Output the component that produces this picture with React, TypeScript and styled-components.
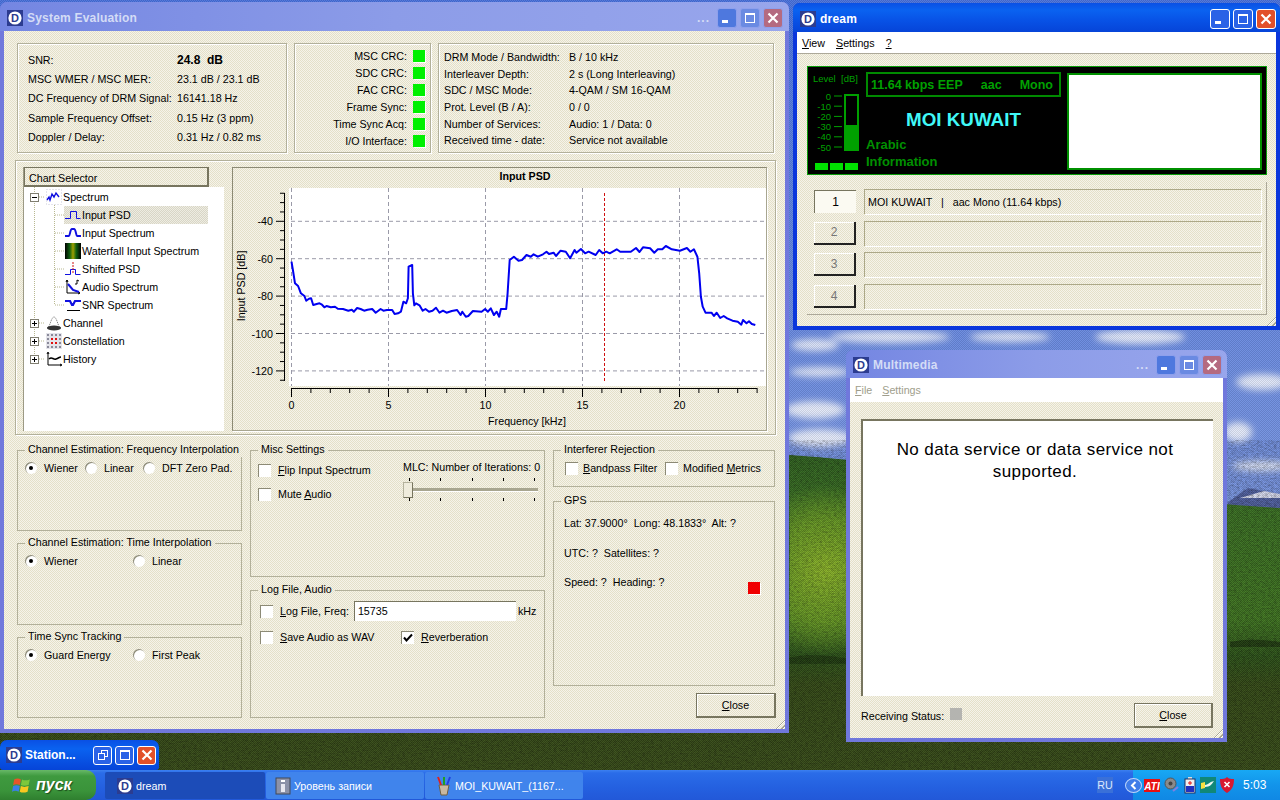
import React from "react";
import styled, { createGlobalStyle, css } from "styled-components";

const Global = createGlobalStyle`
  html, body { margin: 0; padding: 0; overflow: hidden; background: #3a5018; }
  * { box-sizing: border-box; }
  body { font: 10.7px/14px "Liberation Sans", Arial, sans-serif; color: #000; }
  u { text-underline-offset: 1px; }
`;

const dither = css`
  background-color: #ece9d8;
  background-image: repeating-conic-gradient(#e4e0c8 0 25%, #f5f3ea 0 50%);
  background-size: 2px 2px;
`;

const Desktop = styled.div`
  position: relative;
  width: 1280px;
  height: 800px;
  overflow: hidden;
`;
const Wallpaper = styled.div`
  position: absolute;
  inset: 0;
  svg { display: block; }
  &::after {
    content: "";
    position: absolute;
    inset: 0;
    background-image: repeating-conic-gradient(rgba(0,0,0,.1) 0 25%, rgba(255,255,255,.05) 0 50%);
    background-size: 2px 2px;
  }
`;

const Frame = styled.section<{ $x: number; $y: number; $w: number; $h: number; $active?: boolean }>`
  position: absolute;
  left: ${p => p.$x}px;
  top: ${p => p.$y}px;
  width: ${p => p.$w}px;
  height: ${p => p.$h}px;
  display: flex;
  flex-direction: column;
  border-radius: 7px 7px 0 0;
  padding: 0 4px 4px;
  background: ${p => (p.$active ? "#0a36dc" : "#7078dc")};
`;
const TitleBar = styled.header<{ $active?: boolean; $h: number; $right: number }>`
  flex: none;
  height: ${p => p.$h}px;
  display: flex;
  align-items: center;
  margin: 0 -4px;
  padding: 2px ${p => p.$right}px 0 7px;
  border-radius: 7px 7px 0 0;
  background: ${p =>
    p.$active
      ? "linear-gradient(180deg,#0a50e4 0%,#0a62f0 25%,#0852e6 60%,#0644d8 100%)"
      : "linear-gradient(90deg,#7486e2 0%,#8c9ce8 50%,#98a6ec 100%)"};
`;
const TitleText = styled.span<{ $active?: boolean }>`
  margin-left: 4px;
  flex: 1;
  font-size: 12px;
  font-weight: 700;
  letter-spacing: .2px;
  color: ${p => (p.$active ? "#fff" : "#d4dcf6")};
  white-space: nowrap;
`;
const TitleDots = styled.span`
  color: #d4dcf6;
  font-weight: 700;
  font-size: 12px;
  margin-right: 4px;
  letter-spacing: 1px;
`;
const TitleBtn = styled.span<{ $kind: "min" | "max" | "close" | "restore"; $active?: boolean; $size?: number }>`
  flex: none;
  width: ${p => p.$size ?? 20}px;
  height: ${p => p.$size ?? 20}px;
  margin-left: 3px;
  border-radius: 3px;
  display: flex;
  align-items: center;
  justify-content: center;
  border: 1px solid ${p => (p.$active ? "#fff" : "#8ea0ec")};
  background: ${p =>
    p.$kind === "close"
      ? p.$active ? "#e2502a" : "#b46a80"
      : p.$kind === "min" && !p.$active ? "#4e78de" : p.$active ? "#2a62e6" : "#6a8ae2"};
  svg { display: block; }
`;

const Glyph = ({ kind }: { kind: "min" | "max" | "close" | "restore" }) => (
  <svg width="14" height="14" viewBox="0 0 14 14" fill="none" stroke="#fff">
    {kind === "min" && <rect x="2" y="9" width="6" height="3" fill="#fff" stroke="none" />}
    {kind === "max" && (
      <>
        <rect x="2.5" y="2.5" width="9" height="9" strokeWidth="1" />
        <rect x="2" y="2" width="10" height="2" fill="#fff" stroke="none" />
      </>
    )}
    {kind === "restore" && (
      <>
        <rect x="5.5" y="2.5" width="6" height="6" strokeWidth="1" />
        <rect x="2.5" y="5.5" width="6" height="6" strokeWidth="1" fill="#2a62e6" />
      </>
    )}
    {kind === "close" && <path d="M2.5 2.5l9 9M11.5 2.5l-9 9" strokeWidth="2.2" />}
  </svg>
);

const AppIcon = () => (
  <svg width="16" height="16" viewBox="0 0 16 16" style={{ flex: "none" }}>
    <rect width="16" height="16" fill="#2c3c90" />
    <circle cx="8" cy="8" r="6.6" fill="#fff" />
    <text x="8" y="12" textAnchor="middle" fontFamily="Liberation Sans" fontWeight="700" fontSize="11" fill="#2c3c90">D</text>
  </svg>
);

const WindowTitle = ({ title, active, dots, h, right }: { title: string; active?: boolean; dots?: boolean; h: number; right: number }) => (
  <TitleBar $active={active} $h={h} $right={right}>
    <AppIcon />
    <TitleText $active={active}>{title}</TitleText>
    {dots && <TitleDots>...</TitleDots>}
    <TitleBtn $kind="min" $active={active}><Glyph kind="min" /></TitleBtn>
    <TitleBtn $kind="max" $active={active}><Glyph kind="max" /></TitleBtn>
    <TitleBtn $kind="close" $active={active}><Glyph kind="close" /></TitleBtn>
  </TitleBar>
);

const Body = styled.div<{ $pad: string }>`
  ${dither};
  flex: 1;
  min-height: 0;
  position: relative;
  padding: ${p => p.$pad};
  display: flex;
  flex-direction: column;
`;
const Grip = styled.span`
  position: absolute;
  right: 0;
  bottom: 0;
  width: 12px;
  height: 12px;
  background: repeating-linear-gradient(135deg, transparent 0 2px, #a8a590 2px 3px, #fff 3px 4px);
  clip-path: polygon(100% 0, 100% 100%, 0 100%);
`;

/* system evaluation */
const TopGrid = styled.div`
  display: grid;
  grid-template-columns: 270px 137px 336px;
  column-gap: 7px;
  height: 110px;
`;
const Panel = styled.div`
  border: 1px solid #b2b09a;
  box-shadow: inset 1px 1px 0 #fff, 1px 1px 0 #fff;
`;
const InfoPanel = styled(Panel)<{ $cols: string; $row: number; $pad: string }>`
  display: grid;
  grid-template-columns: ${p => p.$cols};
  grid-auto-rows: ${p => p.$row}px;
  align-items: center;
  padding: ${p => p.$pad};
  white-space: nowrap;
`;
const Strong = styled.b`
  font-size: 12px;
`;
const StatusPanel = styled(Panel)`
  display: grid;
  grid-template-columns: 1fr 12px;
  column-gap: 6px;
  grid-auto-rows: 17px;
  align-items: center;
  padding: 3px 5px 0 0;
  text-align: right;
`;
const Led = styled.span<{ $color: string; $drop?: number }>`
  width: 12px;
  height: 12px;
  margin-top: ${p => p.$drop ?? 0}px;
  display: block;
  background: ${p => p.$color};
  box-shadow: 1px 1px 0 #fff;
`;

const ChartPanel = styled(Panel)`
  margin: 7px -1px 0 -2px;
  height: 275px;
  display: grid;
  grid-template-columns: 201px 535px;
  column-gap: 8px;
  padding: 6px 6px 3px 7px;
`;
const Tree = styled.div`
  position: relative;
  background: #fff;
  display: flex;
  flex-direction: column;
  border-left: 1px solid #9c9a84;
  overflow: hidden;
`;
const TreeHead = styled.div`
  ${dither};
  flex: none;
  height: 20px;
  display: flex;
`;
const TreeHeadCell = styled.div`
  width: 185px;
  height: 20px;
  padding: 3px 0 0 4px;
  border: 1px solid #77755f;
  border-bottom-width: 2px;
  border-right-width: 2px;
`;
const TreeLines = styled.svg`
  position: absolute;
  left: 0;
  top: 20px;
`;
const TreeRows = styled.div`
  position: relative;
  padding-top: 1px;
  display: flex;
  flex-direction: column;
`;
const TreeRow = styled.div`
  height: 18px;
  display: flex;
  align-items: center;
  padding-left: 6px;
  column-gap: 1px;
  svg { flex: none; }
`;
const Expander = styled.span`
  width: 9px;
  height: 9px;
  margin-right: 6px;
  border: 1px solid #807e70;
  background: #fff;
  flex: none;
  display: flex;
  align-items: center;
  justify-content: center;
`;
const ChildRow = styled.div<{ $sel?: boolean }>`
  height: 18px;
  width: 144px;
  margin-left: 40px;
  padding-left: 1px;
  display: flex;
  align-items: center;
  column-gap: 1px;
  white-space: nowrap;
  svg { flex: none; }
  ${p => p.$sel && `
    background-image: repeating-conic-gradient(#d8d6c6 0 25%, #eeece2 0 50%);
    background-size: 2px 2px;
  `}
`;
const PlotFrame = styled.div`
  border: 1px solid #a8a690;
  border-top-color: #8c8a74;
  border-left-color: #8c8a74;
  box-shadow: 1px 1px 0 #fff;
  overflow: hidden;
  svg { display: block; }
`;

const BottomGrid = styled.div`
  margin-top: 8px;
  display: grid;
  grid-template-columns: 225px 295px 222px;
  column-gap: 8px;
`;
const Column = styled.div<{ $gap: number }>`
  display: flex;
  flex-direction: column;
  row-gap: ${p => p.$gap}px;
`;
const Group = styled.fieldset<{ $h: number }>`
  margin: 0;
  min-width: 0;
  height: ${p => p.$h}px;
  padding: 4px 7px 0;
  border: 1px solid #b2b09a;
  legend {
    margin-left: 0;
    padding: 0 3px;
    height: 14px;
    line-height: 13px;
    white-space: nowrap;
  }
`;
const ChoiceRow = styled.div<{ $cols: string; $indent?: number }>`
  display: grid;
  grid-template-columns: ${p => p.$cols};
  padding-left: ${p => p.$indent ?? 0}px;
  align-items: center;
  height: 14px;
`;
const Choice = styled.label<{ $w?: number }>`
  display: flex;
  align-items: center;
  white-space: nowrap;
  ${p => p.$w && `width: ${p.$w}px;`}
`;
const RadioMark = styled.span<{ $on?: boolean }>`
  width: 12px;
  height: 12px;
  margin-right: 7px;
  flex: none;
  border-radius: 50%;
  background: #fff;
  box-shadow: inset 1px 1px 0 #8c8a76;
  display: flex;
  align-items: center;
  justify-content: center;
  &::after {
    content: "";
    width: 4px;
    height: 4px;
    border-radius: 50%;
    background: ${p => (p.$on ? "#000" : "transparent")};
  }
`;
const CheckMark = styled.span<{ $gap: number }>`
  width: 13px;
  height: 13px;
  margin-right: ${p => p.$gap}px;
  flex: none;
  background: #fff;
  border-top: 1px solid #8c8a76;
  border-left: 1px solid #8c8a76;
  svg { display: block; }
`;
const Check = ({ on, gap = 7 }: { on?: boolean; gap?: number }) => (
  <CheckMark $gap={gap}>
    {on && (
      <svg width="12" height="12" viewBox="0 0 12 12">
        <path d="M2 5.5l2.5 3L10 2.5" fill="none" stroke="#000" strokeWidth="2" />
      </svg>
    )}
  </CheckMark>
);
const MiscLayout = styled.div`
  display: grid;
  grid-template-columns: 145px 135px;
`;
const CheckStack = styled.div`
  display: flex;
  flex-direction: column;
  row-gap: 10px;
  padding-top: 2px;
`;
const SliderBlock = styled.div`
  display: flex;
  flex-direction: column;
  margin-top: -1px;
  white-space: nowrap;
`;
const Ticks = styled.div<{ $top: number }>`
  display: flex;
  justify-content: space-between;
  margin-top: ${p => p.$top}px;
  padding: 0 3px 0 6px;
  height: 3px;
  span { width: 1px; height: 3px; background: #000; }
`;
const Track = styled.div`
  position: relative;
  height: 16px;
  margin-top: 1px;
  &::before {
    content: "";
    position: absolute;
    left: 0; right: 0; top: 6px;
    height: 3px;
    background: #a8a690;
    border-bottom: 1px solid #fff;
  }
`;
const Thumb = styled.span`
  position: absolute;
  left: 0;
  top: 0;
  width: 10px;
  height: 16px;
  background: #efecdc;
  border: 1px solid #b4b29c;
  border-right-color: #77755f;
  border-bottom-color: #77755f;
`;
const LogRow = styled.div<{ $top?: number }>`
  display: flex;
  align-items: center;
  padding-left: 2px;
  margin-top: ${p => p.$top ?? 0}px;
  white-space: nowrap;
`;
const FreqInput = styled.div`
  width: 162px;
  height: 20px;
  margin: 0 2px 0 5px;
  padding: 2px 0 0 3px;
  background: #fff;
  border-top: 1px solid #77755f;
  border-left: 1px solid #77755f;
`;
const GpsList = styled.div`
  display: flex;
  flex-direction: column;
  row-gap: 15.5px;
  padding: 4px 0 0 3px;
  white-space: nowrap;
`;
const GpsLast = styled.div`
  display: flex;
  justify-content: space-between;
  align-items: flex-start;
  padding-right: 7px;
`;
const CloseButton = styled.div<{ $w: number; $outdent?: boolean }>`
  width: ${p => p.$w}px;
  height: 25px;
  flex: none;
  display: flex;
  align-items: center;
  justify-content: center;
  border: 1px solid #77755f;
  border-right-width: 2px;
  border-bottom-width: 2px;
  box-shadow: inset 1px 1px 0 #fff;
  ${p => p.$outdent && `align-self: flex-end; margin-right: -1px;`}
`;

/* dream */
const MenuBar = styled.nav<{ $h: number; $dim?: boolean; $gap: number }>`
  flex: none;
  height: ${p => p.$h}px;
  display: flex;
  align-items: center;
  column-gap: ${p => p.$gap}px;
  padding-left: 5px;
  background: #fff;
  color: ${p => (p.$dim ? "#a09e8c" : "#000")};
  border-bottom: 1px solid ${p => (p.$dim ? "#fff" : "#aca899")};
`;
const Display = styled.div`
  height: 109px;
  flex: none;
  background: #000;
  border: 1px solid #0a9a0a;
  display: grid;
  grid-template-columns: 52px 195px 195px;
  column-gap: 6px;
  padding: 5px 0 0;
`;
const LevelCol = styled.div`
  display: flex;
  flex-direction: column;
  padding-left: 5px;
  color: #00a000;
  font-size: 9.5px;
  svg { display: block; margin-top: 6px; overflow: visible; }
`;
const LevelLabel = styled.span`
  white-space: pre;
  line-height: 12px;
  margin-top: 1px;
`;
const LedRow = styled.div`
  display: flex;
  column-gap: 2px;
  margin: 10px 0 0 2px;
  span { flex: none; width: 13px; height: 7px; background: #00e000; }
`;
const StreamCol = styled.div`
  display: flex;
  flex-direction: column;
`;
const StatusBox = styled.div`
  height: 25px;
  border: 2px solid #008a00;
  display: flex;
  align-items: center;
  justify-content: space-between;
  padding: 0 6px 0 3px;
  color: #00a000;
  font: 700 12.5px "Liberation Sans", sans-serif;
  white-space: nowrap;
`;
const Station = styled.div`
  margin-top: 11px;
  height: 24px;
  line-height: 24px;
  text-align: center;
  color: #40f8f8;
  font-weight: 700;
  font-size: 18.8px;
`;
const TagList = styled.div`
  margin-top: 4px;
  display: flex;
  flex-direction: column;
`;
const Tag = styled.div`
  height: 17px;
  line-height: 17px;
  color: #009000;
  font-weight: 700;
  font-size: 13px;
`;
const LogoBox = styled.div`
  height: 97px;
  margin-top: 1px;
  background: #fff;
  border: 2px solid #009000;
`;
const Services = styled.div`
  margin-top: 7px;
  height: 133px;
  padding: 7px 0 0 7px;
  border-right: 1px solid #aca899;
  border-bottom: 1px solid #aca899;
  display: flex;
  flex-direction: column;
  row-gap: 7.7px;
`;
const ServiceRow = styled.div`
  display: grid;
  grid-template-columns: 42px 397px;
  column-gap: 8px;
  height: 24px;
  align-items: center;
`;
const ServiceBtn = styled.div<{ $on?: boolean }>`
  height: 23px;
  display: flex;
  align-items: center;
  justify-content: center;
  font-size: 12px;
  ${p =>
    p.$on
      ? `background:#fbfaf2; border-top:1px solid #77755f; border-left:1px solid #77755f; color:#000;`
      : `border-right:2px solid #222; border-bottom:2px solid #222; box-shadow: inset 1px 1px 0 #fff; color:#777;`}
`;
const ServiceLabel = styled.div`
  height: 25px;
  padding-left: 3px;
  display: flex;
  align-items: center;
  white-space: pre;
  border-top: 1px solid #aca888;
  border-left: 1px solid #aca888;
  box-shadow: 1px 1px 0 #fff;
`;

/* multimedia */
const TextPanel = styled.div`
  height: 277px;
  flex: none;
  background: #fff;
  border-top: 2px solid #77755f;
  border-left: 2px solid #77755f;
  padding: 18px 30px 0 24px;
  font-size: 17px;
  line-height: 22px;
  letter-spacing: .4px;
  text-align: center;
`;
const FooterRow = styled.div`
  display: flex;
  align-items: center;
  justify-content: space-between;
  margin-top: 7px;
`;
const StatusLabel = styled.div`
  display: flex;
  align-items: center;
  column-gap: 6px;
`;
const GreyLed = styled.span`
  width: 12px;
  height: 12px;
  margin-top: -4px;
  background: #b4b4b0;
`;

/* taskbar */
const MiniWindow = styled.div`
  position: absolute;
  left: 0;
  top: 740px;
  width: 159px;
  height: 30px;
  display: flex;
  align-items: center;
  padding: 0 3px 0 6px;
  border-radius: 7px 7px 3px 3px;
  background: linear-gradient(180deg,#0a50e4,#0a62f0 30%,#0644d8);
`;
const MiniText = styled.span`
  margin: 0 4px 0 3px;
  flex: 1;
  color: #fff;
  font-size: 12px;
  font-weight: 700;
  white-space: nowrap;
`;
const Taskbar = styled.footer`
  position: absolute;
  left: 0;
  right: 0;
  bottom: 0;
  height: 30px;
  display: flex;
  align-items: stretch;
  background: linear-gradient(180deg,#3c80f0 0,#2a6ce8 10%,#2460e0 60%,#2258d8);
`;
const StartBtn = styled.div`
  width: 96px;
  flex: none;
  display: flex;
  align-items: center;
  column-gap: 4px;
  padding-left: 12px;
  border-radius: 0 10px 10px 0;
  background: linear-gradient(180deg,#68b868 0,#3f9a3f 20%,#3a933a 70%,#2f7f2f);
  color: #fff;
  font: italic 700 16px "Liberation Sans", sans-serif;
  text-shadow: 1px 1px 1px #1c4c1c;
`;
const Tasks = styled.div`
  display: flex;
  margin-left: 9px;
  column-gap: 1px;
  padding: 2px 0 1px;
`;
const Task = styled.div<{ $w: number; $on?: boolean; $pad: number }>`
  width: ${p => p.$w}px;
  display: flex;
  align-items: center;
  column-gap: 3px;
  padding-left: ${p => p.$pad}px;
  color: #fff;
  white-space: nowrap;
  border-radius: 2px;
  background: ${p => (p.$on ? "#1c4cb8" : "#4084ec")};
  svg { flex: none; }
`;
const Lang = styled.div`
  margin-left: auto;
  align-self: center;
  width: 16px;
  height: 16px;
  margin-right: 20px;
  display: flex;
  align-items: center;
  justify-content: center;
  color: #dce8ff;
  background: #3a70d8;
`;
const Tray = styled.div`
  width: 147px;
  flex: none;
  position: relative;
  display: flex;
  align-items: center;
  padding-left: 11px;
  background: linear-gradient(180deg,#18a8f4,#1294ea 50%,#1088e4);
  svg { display: block; flex: none; }
`;
const Chevron = styled.span`
  position: absolute;
  left: -8px;
  top: 8px;
  width: 17px;
  height: 15px;
  border-radius: 50%;
  background: #3f7ce8;
  border: 1px solid #bcd4fa;
  display: flex;
  align-items: center;
  justify-content: center;
  svg { display: block; }
`;
const TrayIcons = styled.div`
  display: flex;
  align-items: center;
  column-gap: 4px;
`;
const Clock = styled.span`
  margin-left: 9px;
  color: #fff;
  font-size: 12px;
`;

/* data */
const curveZ = [178,305,182,330,188,370,197,378,205,400,215,408,220,422,228,416,234,415,240,435,250,432,258,430,265,434,272,442,278,438,290,442,302,440,310,446,325,447,340,452,350,449,356,455,365,444,375,447,385,452,395,449,408,447,418,458,432,447,440,452,450,450,465,450,472,462,482,460,490,455,497,425,505,430,510,415,512,320,516,318,522,315,524,400,528,436,533,430,543,436,552,452,560,447,570,455,580,452,590,443,600,458,610,452,620,458,635,453,650,450,660,465,665,455,675,470,682,468,695,453,720,455,730,447,738,455,746,445,755,465,763,455,770,470,775,447,790,447,794,400,800,300,812,290,825,302,835,300,848,285,860,290,868,283,880,290,895,283,905,275,912,282,925,278,932,288,945,272,960,275,972,295,985,270,990,278,1003,267,1015,280,1025,275,1045,285,1055,270,1065,280,1075,275,1085,280,1105,268,1115,275,1130,275,1145,275,1160,264,1170,276,1180,262,1200,265,1212,278,1222,268,1235,268,1245,258,1262,268,1285,272,1305,264,1315,275,1325,268,1335,290,1340,340,1345,410,1350,440,1358,458,1375,458,1382,468,1390,458,1400,474,1410,468,1420,475,1435,482,1450,485,1460,494,1465,480,1475,490,1482,484,1490,492,1500,495];
const curve = curveZ
  .reduce<string[]>((acc, v, i) => {
    if (i % 2 === 0) acc.push(`${(230 + v / 2.85).toFixed(1)},${(160 + curveZ[i + 1] / 3).toFixed(1)}`);
    return acc;
  }, [])
  .join(" ");

const xAt = (k: number) => 292.5 + k * 19.4;
const yAt = (db: number) => 221.3 + (-40 - db) * 1.87;
const range = (a: number, b: number, s: number) => {
  const r: number[] = [];
  for (let v = a; v <= b; v += s) r.push(v);
  return r;
};

const Plot = () => (
  <svg width="533" height="262" viewBox="234 168 533 262" fontFamily="Liberation Sans" fontSize="10.7">
    <text x="526" y="180" fontWeight="700" textAnchor="middle">Input PSD</text>
    <rect x="290" y="188" width="477" height="198" fill="#fff" />
    <g stroke="#9a9aa8" strokeDasharray="4 3" strokeWidth="1">
      {[0, 5, 10, 15, 20].map(k => <line key={k} x1={xAt(k)} x2={xAt(k)} y1="188" y2="386" />)}
      {[-40, -60, -80, -100, -120].map(d => <line key={d} x1="292" x2="767" y1={yAt(d)} y2={yAt(d)} />)}
    </g>
    <line x1="605.5" x2="605.5" y1="193" y2="382" stroke="#d01010" strokeDasharray="3 2" />
    <polyline points={curve} fill="none" stroke="#0000f0" strokeWidth="2" strokeLinejoin="round" />
    <g stroke="#000">
      <line x1="285.5" x2="285.5" y1="193" y2="381" />
      {range(-125, -25, 5).map(d => (
        <line key={d} x1={d % 20 === 0 ? 277 : 281} x2="285.5" y1={yAt(d)} y2={yAt(d)} />
      ))}
      <line x1="292.5" x2="758" y1="388.5" y2="388.5" />
      {range(0, 24, 1).map(k => (
        <line key={k} x1={xAt(k)} x2={xAt(k)} y1="388" y2={k % 5 === 0 ? 397 : 393} />
      ))}
    </g>
    {[-40, -60, -80, -100, -120].map(d => (
      <text key={d} x="274" y={yAt(d) + 4} textAnchor="end">{d}</text>
    ))}
    {[0, 5, 10, 15, 20].map(k => (
      <text key={k} x={xAt(k)} y="409" textAnchor="middle">{k}</text>
    ))}
    <text x="528" y="425" textAnchor="middle">Frequency [kHz]</text>
    <text transform="translate(246 286) rotate(-90)" textAnchor="middle">Input PSD [dB]</text>
  </svg>
);

const I = ({ children }: { children: React.ReactNode }) => (
  <svg width="16" height="16" viewBox="0 0 16 16" fill="none">{children}</svg>
);
const icons: Record<string, React.ReactNode> = {
  spectrum: (
    <I>
      <rect x=".5" y=".5" width="15" height="15" stroke="#c8c8d8" strokeDasharray="1 2" />
      <path d="M1 11l2-3 1 3 2-6 2 3 2-4 3 4" stroke="#1010e0" strokeWidth="1.4" />
    </I>
  ),
  psd: <I><path d="M0 11.5h5.5v-7h6v7h4" stroke="#1010e0" /></I>,
  input: <I><path d="M0 11h4c1 0 1-7 3-7h2c2 0 2 7 3 7h4" stroke="#1010e0" strokeWidth="2" /></I>,
  waterfall: (
    <svg width="16" height="16" viewBox="0 0 16 16">
      <defs>
        <linearGradient id="wf">
          <stop offset="0" stopColor="#000" /><stop offset=".3" stopColor="#106010" />
          <stop offset=".5" stopColor="#a0a000" /><stop offset=".7" stopColor="#106010" />
          <stop offset="1" stopColor="#000" />
        </linearGradient>
      </defs>
      <rect width="16" height="16" fill="url(#wf)" />
    </svg>
  ),
  shifted: (
    <I>
      <path d="M0 13.5h5.5v-5h5v5h5" stroke="#1010e0" />
      <path d="M8 1v11" stroke="#d01010" strokeDasharray="2 1" />
    </I>
  ),
  audio: (
    <I>
      <path d="M2 1v13h13M1 3l1-2 1 2M13 13l2 1-2 1" stroke="#000" />
      <path d="M3 5l5 6 6 2" stroke="#1010e0" strokeWidth="2" />
      <path d="M12 1v4M10 5h2M12 1l2 1" stroke="#000" />
    </I>
  ),
  snr: (
    <I>
      <path d="M0 4h5l2 4h1l2-4h6" stroke="#1010e0" strokeWidth="2.2" />
      <path d="M2 13.5h13" stroke="#000" />
    </I>
  ),
  channel: (
    <I>
      <path d="M1 13C4 13 5 2 8 2s4 11 7 11" stroke="#666" strokeDasharray="1 1" />
      <ellipse cx="8" cy="13" rx="7" ry="2.4" fill="#333" />
    </I>
  ),
  constellation: (
    <svg width="16" height="16" viewBox="0 0 16 16">
      <rect width="16" height="16" fill="#e4e4ea" />
      {[2, 6, 10, 14].flatMap(x =>
        [2, 6, 10, 14].map(y => (
          <rect key={`${x}-${y}`} x={x - 1} y={y - 1} width="2" height="2" fill={(x === 6 || x === 10) && (y === 6 || y === 10) ? "#e01010" : "#8a8a9a"} />
        ))
      )}
    </svg>
  ),
  history: (
    <I>
      <path d="M2 2v12h13M1 3l1-2 1 2M14 13l2 1-2 1" stroke="#000" />
      <path d="M3 8c3-3 4 1 7 0s3-2 5-2" stroke="#000" strokeWidth="1.5" />
    </I>
  ),
};

const Minus = () => (
  <svg width="7" height="7" viewBox="0 0 7 7"><path d="M1 3.5h5" stroke="#000" /></svg>
);
const Plus = () => (
  <svg width="7" height="7" viewBox="0 0 7 7"><path d="M1 3.5h5M3.5 1v5" stroke="#000" /></svg>
);

const Flag = () => (
  <svg width="20" height="20" viewBox="0 0 18 18">
    <path d="M2 4c2-1 4-1 6 0l-1 5c-2-1-4-1-6 0z" fill="#e8552a" />
    <path d="M9 4c2 1 4 1 7 0l-1 5c-3 1-5 1-7 0z" fill="#7cc83c" />
    <path d="M1 10c2-1 4-1 6 0l-1 5c-2-1-4-1-6 0z" fill="#3a80e8" />
    <path d="M8 10c2 1 4 1 7 0l-1 5c-3 1-5 1-7 0z" fill="#f8c820" />
  </svg>
);
const LevelIcon = () => (
  <svg width="16" height="18" viewBox="0 0 16 18">
    <rect x="1" y="1" width="14" height="16" fill="#8c92a8" stroke="#404858" />
    <rect x="6" y="3" width="4" height="2" fill="#fff" />
    <rect x="6" y="7" width="4" height="8" fill="#e8e8f0" />
  </svg>
);
const PaintIcon = () => (
  <svg width="16" height="20" viewBox="0 0 16 20">
    <path d="M3 9h10l-2 10H5z" fill="#c8b8a0" stroke="#706040" />
    <path d="M5 9L2 1" stroke="#e02020" strokeWidth="2" />
    <path d="M8 9V1" stroke="#20a020" strokeWidth="2" />
    <path d="M11 9l3-8" stroke="#2040e0" strokeWidth="2" />
  </svg>
);

const Wall = () => (
  <svg width="1280" height="800" viewBox="0 0 1280 800">
    <defs>
      <linearGradient id="sky" x1="0" y1="0" x2="0" y2="1">
        <stop offset="0" stopColor="#4a72dc" />
        <stop offset="1" stopColor="#7a96e0" />
      </linearGradient>
      <linearGradient id="land" x1="0" y1="0" x2="0" y2="1">
        <stop offset="0" stopColor="#2c5c1e" />
        <stop offset=".2" stopColor="#3a7022" />
        <stop offset=".5" stopColor="#3f7420" />
        <stop offset=".6" stopColor="#2c5218" />
        <stop offset=".68" stopColor="#344a16" />
        <stop offset="1" stopColor="#384c18" />
      </linearGradient>
      <radialGradient id="glow" cx="825" cy="570" r="85" gradientUnits="userSpaceOnUse">
        <stop offset="0" stopColor="#8cb428" />
        <stop offset=".6" stopColor="#70a024" stopOpacity=".8" />
        <stop offset="1" stopColor="#70a024" stopOpacity="0" />
      </radialGradient>
      <filter id="soft" x="-30%" y="-60%" width="160%" height="220%">
        <feGaussianBlur stdDeviation="3.5" />
      </filter>
      <filter id="grain" x="0" y="0" width="100%" height="100%">
        <feTurbulence type="fractalNoise" baseFrequency=".35 .6" numOctaves="2" seed="4" />
        <feColorMatrix values="0 0 0 0 0  0 0 0 0 0  0 0 0 0 0  1.6 0 0 0 -.55" />
      </filter>
    </defs>
    <rect width="1280" height="520" fill="url(#sky)" />
    <g fill="#fff" opacity=".8" filter="url(#soft)">
      <ellipse cx="815" cy="345" rx="24" ry="6" />
      <ellipse cx="820" cy="372" rx="30" ry="5" />
      <ellipse cx="815" cy="410" rx="30" ry="9" />
      <ellipse cx="820" cy="438" rx="32" ry="9" />
      <ellipse cx="890" cy="337" rx="60" ry="6" />
      <ellipse cx="1010" cy="337" rx="40" ry="5" />
      <ellipse cx="1140" cy="337" rx="45" ry="7" />
      <ellipse cx="1262" cy="382" rx="26" ry="8" />
      <ellipse cx="1238" cy="432" rx="14" ry="10" />
      <ellipse cx="1262" cy="466" rx="30" ry="5" />
    </g>
    <path d="M1228 502l20-14 32 6v16h-52z" fill="#5060a0" />
    <path d="M1240 498l24-7 16 3v4z" fill="#d8dcf0" />
    <path d="M0 440C300 440 600 445 790 455c150 10 340 45 490 53v292H0z" fill="url(#land)" />
    <rect x="790" y="470" width="130" height="190" fill="url(#glow)" />
    <path d="M1230 642c20-4 35-2 50 0v5h-50z" fill="#203c10" />
    <path d="M790 657c20-3 40-2 60 2v5h-60z" fill="#203c10" />
    <rect y="440" width="1280" height="360" filter="url(#grain)" opacity=".35" />
  </svg>
);

export default function App() {
  return (
    <Desktop>
      <Global />
      <Wallpaper><Wall /></Wallpaper>

      {/* System Evaluation */}
      <Frame $x={0} $y={2} $w={789} $h={731}>
        <WindowTitle title="System Evaluation" dots h={29} right={6} />
        <Body $pad="12px 10px 0 13px">
          <TopGrid>
            <InfoPanel $cols="149px 1fr" $row={19.4} $pad="6px 0 0 10px">
              <span>SNR:</span><Strong>24.8&nbsp; dB</Strong>
              <span>MSC WMER / MSC MER:</span><span>23.1 dB / 23.1 dB</span>
              <span>DC Frequency of DRM Signal:</span><span>16141.18 Hz</span>
              <span>Sample Frequency Offset:</span><span>0.15 Hz (3 ppm)</span>
              <span>Doppler / Delay:</span><span>0.31 Hz / 0.82 ms</span>
            </InfoPanel>
            <StatusPanel>
              {["MSC CRC:", "SDC CRC:", "FAC CRC:", "Frame Sync:", "Time Sync Acq:", "I/O Interface:"].map(t => (
                <React.Fragment key={t}>
                  <span>{t}</span>
                  <Led $color="#00f000" />
                </React.Fragment>
              ))}
            </StatusPanel>
            <InfoPanel $cols="125px 1fr" $row={16.6} $pad="5px 0 0 5px">
              <span>DRM Mode / Bandwidth:</span><span>B / 10 kHz</span>
              <span>Interleaver Depth:</span><span>2 s (Long Interleaving)</span>
              <span>SDC / MSC Mode:</span><span>4-QAM / SM 16-QAM</span>
              <span>Prot. Level (B / A):</span><span>0 / 0</span>
              <span>Number of Services:</span><span>Audio: 1 / Data: 0</span>
              <span>Received time - date:</span><span>Service not available</span>
            </InfoPanel>
          </TopGrid>

          <ChartPanel>
            <Tree>
              <TreeHead><TreeHeadCell>Chart Selector</TreeHeadCell></TreeHead>
              <TreeLines width="200" height="190">
                <g stroke="#b8b890" strokeDasharray="1 1" fill="none">
                  <path d="M10.5 0V172M15 10h6M15 136h6M15 154h6M15 172h6" />
                  <path d="M30.5 18V118M31 28h9M31 46h9M31 64h9M31 82h9M31 100h9M31 118h9" />
                </g>
              </TreeLines>
              <TreeRows>
                <TreeRow><Expander><Minus /></Expander>{icons.spectrum}Spectrum</TreeRow>
                <ChildRow $sel>{icons.psd}Input PSD</ChildRow>
                <ChildRow>{icons.input}Input Spectrum</ChildRow>
                <ChildRow>{icons.waterfall}Waterfall Input Spectrum</ChildRow>
                <ChildRow>{icons.shifted}Shifted PSD</ChildRow>
                <ChildRow>{icons.audio}Audio Spectrum</ChildRow>
                <ChildRow>{icons.snr}SNR Spectrum</ChildRow>
                <TreeRow><Expander><Plus /></Expander>{icons.channel}Channel</TreeRow>
                <TreeRow><Expander><Plus /></Expander>{icons.constellation}Constellation</TreeRow>
                <TreeRow><Expander><Plus /></Expander>{icons.history}History</TreeRow>
              </TreeRows>
            </Tree>
            <PlotFrame><Plot /></PlotFrame>
          </ChartPanel>

          <BottomGrid>
            <Column $gap={5}>
              <Group $h={88}>
                <legend>Channel Estimation: Frequency Interpolation</legend>
                <ChoiceRow $cols="60px 58px 1fr">
                  <Choice><RadioMark $on />Wiener</Choice>
                  <Choice><RadioMark />Linear</Choice>
                  <Choice><RadioMark />DFT Zero Pad.</Choice>
                </ChoiceRow>
              </Group>
              <Group $h={89}>
                <legend>Channel Estimation: Time Interpolation</legend>
                <ChoiceRow $cols="108px 1fr">
                  <Choice><RadioMark $on />Wiener</Choice>
                  <Choice><RadioMark />Linear</Choice>
                </ChoiceRow>
              </Group>
              <Group $h={88}>
                <legend>Time Sync Tracking</legend>
                <ChoiceRow $cols="108px 1fr">
                  <Choice><RadioMark $on />Guard Energy</Choice>
                  <Choice><RadioMark />First Peak</Choice>
                </ChoiceRow>
              </Group>
            </Column>

            <Column $gap={6}>
              <Group $h={134}>
                <legend>Misc Settings</legend>
                <MiscLayout>
                  <CheckStack>
                    <Choice><Check /><span><u>F</u>lip Input Spectrum</span></Choice>
                    <Choice><Check /><span>Mute <u>A</u>udio</span></Choice>
                  </CheckStack>
                  <SliderBlock>
                    <span>MLC: Number of Iterations: 0</span>
                    <Ticks $top={4}><span /><span /><span /><span /><span /></Ticks>
                    <Track><Thumb /></Track>
                    <Ticks $top={0}><span /><span /><span /><span /><span /></Ticks>
                  </SliderBlock>
                </MiscLayout>
              </Group>
              <Group $h={135}>
                <legend>Log File, Audio</legend>
                <LogRow>
                  <Check /><span><u>L</u>og File, Freq:</span>
                  <FreqInput>15735</FreqInput>
                  <span>kHz</span>
                </LogRow>
                <LogRow $top={9}>
                  <Choice $w={141}><Check /><span><u>S</u>ave Audio as WAV</span></Choice>
                  <Choice><Check on /><span><u>R</u>everberation</span></Choice>
                </LogRow>
              </Group>
            </Column>

            <Column $gap={7}>
              <Group $h={44}>
                <legend>Interferer Rejection</legend>
                <ChoiceRow $cols="100px 1fr" $indent={4}>
                  <Choice><Check gap={5} /><span><u>B</u>andpass Filter</span></Choice>
                  <Choice><Check gap={5} /><span>Modified <u>M</u>etrics</span></Choice>
                </ChoiceRow>
              </Group>
              <Group $h={192}>
                <legend>GPS</legend>
                <GpsList>
                  <span>Lat: 37.9000°&nbsp; Long: 48.1833°&nbsp; Alt: ?</span>
                  <span>UTC: ?&nbsp; Satellites: ?</span>
                  <GpsLast>
                    <span>Speed: ?&nbsp; Heading: ?</span>
                    <Led $color="#f00000" $drop={7} />
                  </GpsLast>
                </GpsList>
              </Group>
              <CloseButton $w={80} $outdent>
                <span><u>C</u>lose</span>
              </CloseButton>
            </Column>
          </BottomGrid>
          <Grip />
        </Body>
      </Frame>

      {/* dream */}
      <Frame $x={793} $y={3} $w={487} $h={327} $active>
        <WindowTitle title="dream" active h={29} right={4} />
        <MenuBar $h={22} $gap={11}>
          <span><u>V</u>iew</span>
          <span><u>S</u>ettings</span>
          <span><u>?</u></span>
        </MenuBar>
        <Body $pad="12px 9px 0 10px">
          <Display>
            <LevelCol>
              <LevelLabel>{"Level  [dB]"}</LevelLabel>
              <svg width="48" height="62" viewBox="813 92 48 62" fontFamily="Liberation Sans" fontSize="9.5" fill="#00a000">
                {[0, 10, 20, 30, 40, 50].map((d, i) => (
                  <g key={d}>
                    <text x="831" y={100.5 + i * 10.2} textAnchor="end">{d === 0 ? "0" : `-${d}`}</text>
                    <line x1="834" x2="842" y1={97 + i * 10.2} y2={97 + i * 10.2} stroke="#00a000" />
                  </g>
                ))}
                <rect x="845" y="96" width="13" height="55" fill="none" stroke="#00a000" strokeWidth="2" />
                <rect x="845" y="126" width="13" height="25" fill="#00a000" />
              </svg>
              <LedRow><span /><span /><span /></LedRow>
            </LevelCol>
            <StreamCol>
              <StatusBox>
                <span>11.64 kbps EEP</span>
                <span>aac</span>
                <span>Mono</span>
              </StatusBox>
              <Station>MOI KUWAIT</Station>
              <TagList>
                <Tag>Arabic</Tag>
                <Tag>Information</Tag>
              </TagList>
            </StreamCol>
            <LogoBox />
          </Display>
          <Services>
            <ServiceRow>
              <ServiceBtn $on>1</ServiceBtn>
              <ServiceLabel>{"MOI KUWAIT   |   aac Mono (11.64 kbps)"}</ServiceLabel>
            </ServiceRow>
            {["2", "3", "4"].map(n => (
              <ServiceRow key={n}>
                <ServiceBtn>{n}</ServiceBtn>
                <ServiceLabel />
              </ServiceRow>
            ))}
          </Services>
          <Grip />
        </Body>
      </Frame>

      {/* Multimedia */}
      <Frame $x={846} $y={350} $w={381} $h={392}>
        <WindowTitle title="Multimedia" dots h={28} right={5} />
        <MenuBar $h={24} $dim $gap={10}>
          <span><u>F</u>ile</span>
          <span><u>S</u>ettings</span>
        </MenuBar>
        <Body $pad="17px 10px 0 11px">
          <TextPanel>No data service or data service not supported.</TextPanel>
          <FooterRow>
            <StatusLabel><span>Receiving Status:</span><GreyLed /></StatusLabel>
            <CloseButton $w={79}><span><u>C</u>lose</span></CloseButton>
          </FooterRow>
          <Grip />
        </Body>
      </Frame>

      <MiniWindow>
        <AppIcon />
        <MiniText>Station...</MiniText>
        <TitleBtn $kind="restore" $active $size={19}><Glyph kind="restore" /></TitleBtn>
        <TitleBtn $kind="max" $active $size={19}><Glyph kind="max" /></TitleBtn>
        <TitleBtn $kind="close" $active $size={19}><Glyph kind="close" /></TitleBtn>
      </MiniWindow>

      <Taskbar>
        <StartBtn><Flag />пуск</StartBtn>
        <Tasks>
          <Task $w={160} $on $pad={12}><AppIcon />dream</Task>
          <Task $w={158} $pad={9}><LevelIcon />Уровень записи</Task>
          <Task $w={158} $pad={11}><PaintIcon />MOI_KUWAIT_(1167...</Task>
        </Tasks>
        <Lang>RU</Lang>
        <Tray>
          <Chevron>
            <svg width="8" height="9" viewBox="0 0 8 9"><path d="M5.5 1L2 4.5 5.5 8" fill="none" stroke="#fff" strokeWidth="2" /></svg>
          </Chevron>
          <TrayIcons>
            <svg width="16" height="13" viewBox="0 0 16 13">
              <rect width="16" height="13" fill="#e81010" />
              <text x="8" y="10.5" textAnchor="middle" fontFamily="Liberation Sans" fontWeight="700" fontStyle="italic" fontSize="10" fill="#fff">ATI</text>
            </svg>
            <svg width="16" height="16" viewBox="0 0 16 16">
              <circle cx="6.5" cy="6.5" r="5.5" fill="#8a8a8a" stroke="#555" />
              <circle cx="6.5" cy="6.5" r="2" fill="#444" />
              <path d="M9 14l5-4" stroke="#8080e0" strokeWidth="2" />
            </svg>
            <svg width="12" height="17" viewBox="0 0 12 17">
              <rect x="4" y="0" width="4" height="2" fill="#ddd" />
              <rect x="1" y="2" width="10" height="14" fill="#f0f0f0" stroke="#203060" />
              <rect x="2" y="9" width="8" height="6" fill="#2030c0" />
              <path d="M6 4v4M4 6h4" stroke="#e01010" />
            </svg>
            <svg width="16" height="16" viewBox="0 0 16 16">
              <rect width="16" height="16" fill="#108878" />
              <path d="M1 6l4-1v6l-4 1z" fill="#f8e040" />
              <path d="M5 8c3 0 4-3 9-4-2 3-4 6-9 6z" fill="#e8f4f0" />
            </svg>
            <svg width="14" height="16" viewBox="0 0 14 16">
              <path d="M7 0c2 2 4 2 7 2 0 7-2 11-7 14C2 13 0 9 0 2c3 0 5 0 7-2z" fill="#d81830" />
              <path d="M4.5 5l5 5M9.5 5l-5 5" stroke="#fff" strokeWidth="1.6" />
            </svg>
          </TrayIcons>
          <Clock>5:03</Clock>
        </Tray>
      </Taskbar>
    </Desktop>
  );
}
